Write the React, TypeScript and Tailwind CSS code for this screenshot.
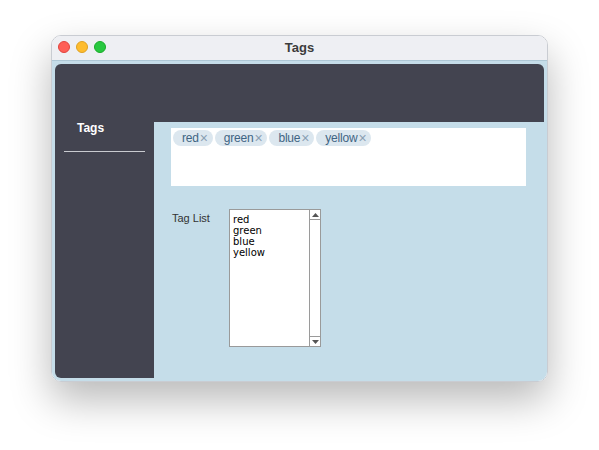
import React from "react"

const tags = ["red", "green", "blue", "yellow"]

function TagChip({ label }: { label: string }) {
  return (
    <span className="flex items-center h-[16px] rounded-full bg-[#dce7ef] pl-[9px] pr-[5px] text-[12px] leading-none text-[#3f6584] tracking-[-0.2px]">
      {label}
      <span className="ml-[1px] text-[14px] text-[#8aa0b3]">×</span>
    </span>
  )
}

export default function App() {
  return (
    <div
      className="w-[599px] h-[450px] bg-white pt-[35px] pl-[51px]"
      style={{ fontFamily: "'Liberation Sans', Arial, sans-serif" }}
    >
      <div className="w-[497px] h-[347px] rounded-[10px] overflow-hidden flex flex-col border border-[#c9ccd2] shadow-[0_18px_40px_rgba(0,0,0,0.28)]">
        {/* Title bar */}
        <div className="relative h-[25px] bg-[#eeeff3] flex items-center justify-center border-b border-[#aec8d6]">
          <div className="absolute left-[6px] top-[5px] flex gap-[6px]">
            <span className="w-[12px] h-[12px] rounded-full bg-[#fe5f57] border border-[#e0443e]" />
            <span className="w-[12px] h-[12px] rounded-full bg-[#febc2e] border border-[#dea123]" />
            <span className="w-[12px] h-[12px] rounded-full bg-[#28c840] border border-[#1aab29]" />
          </div>
          <span className="text-[13px] font-bold text-[#3c3c3c]">Tags</span>
        </div>

        {/* Body */}
        <div className="flex-1 bg-[#c5dde9] pt-[3px] pl-[3px] pb-[3px] flex flex-col">
          <div className="h-[58px] mr-[3px] bg-[#434450] rounded-t-[6px]" />
          <div className="flex-1 flex">
            <div className="w-[99px] bg-[#434450] rounded-bl-[6px] px-[9px] -mt-[3px]">
              <div className="text-white text-[12px] font-bold pl-[13px] h-[32px]">Tags</div>
              <div className="h-[1px] bg-[#c9cbd0] w-[81px]" />
            </div>
            <div className="flex-1 pl-[17px] pr-[21px] pt-[6px]">
              <div className="h-[58px] bg-white px-[2px] pt-[2px] flex gap-[2px] items-start">
                {tags.map((t) => (
                  <TagChip key={t} label={t} />
                ))}
              </div>
              <div className="flex mt-[23px]">
                <div className="w-[58px] text-[11px] text-[#333] pt-[1px] pl-[1px]">Tag List</div>
                <div className="w-[92px] h-[138px] bg-white border border-[#9a9a9a] flex">
                  <div className="flex-1 leading-[11px] text-black pt-[4px] pl-[3px]" style={{ fontFamily: "'DejaVu Sans', Verdana, sans-serif", fontSize: "10px" }}>
                    {tags.map((t) => (
                      <div key={t}>{t}</div>
                    ))}
                  </div>
                  <div className="w-[11px] border-l border-[#9a9a9a] flex flex-col justify-between">
                    <div className="h-[10px] border-b border-[#9a9a9a] flex items-center justify-center">
                      <svg width="7" height="4" viewBox="0 0 7 4"><path d="M3.5 0 L7 4 L0 4 Z" fill="#555" /></svg>
                    </div>
                    <div className="h-[10px] border-t border-[#9a9a9a] flex items-center justify-center">
                      <svg width="7" height="4" viewBox="0 0 7 4"><path d="M0 0 L7 0 L3.5 4 Z" fill="#555" /></svg>
                    </div>
                  </div>
                </div>
              </div>
            </div>
          </div>
        </div>
      </div>
    </div>
  )
}
